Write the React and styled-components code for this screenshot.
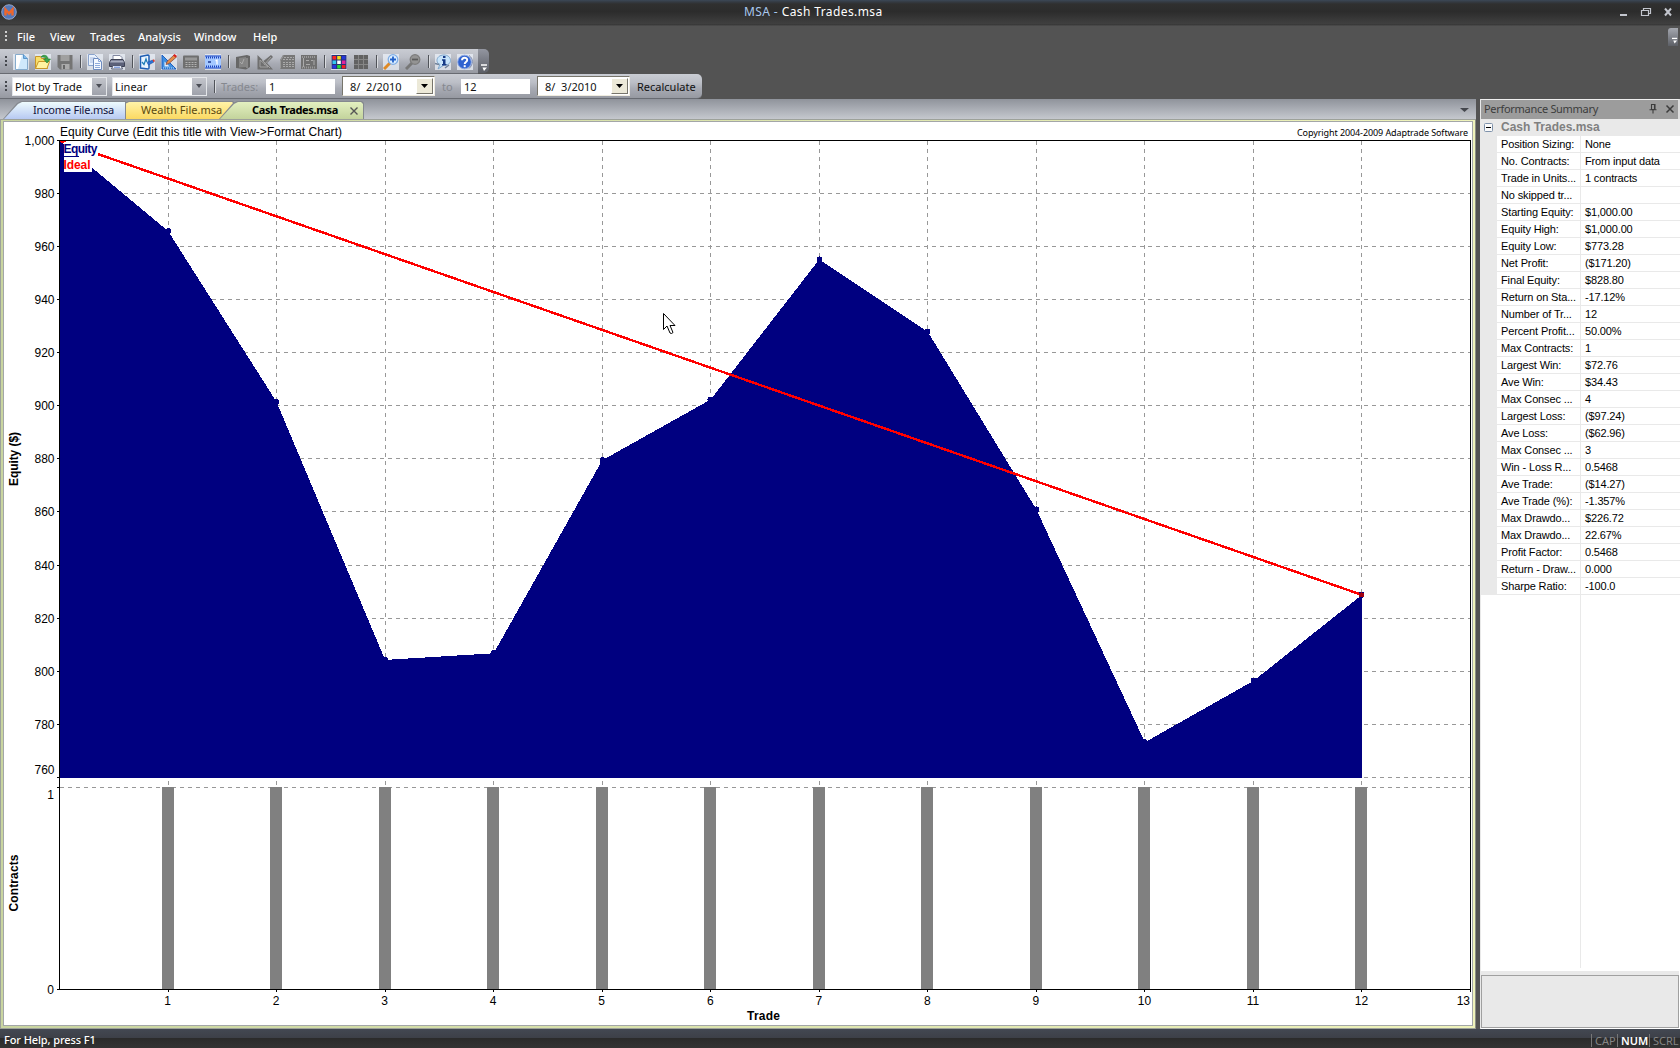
import React from "react";
import styled, { createGlobalStyle, css } from "styled-components";

const MENUS = [
    ["File", 17, 17],
    ["View", 16, 25],
    ["Trades", 15, 33],
    ["Analysis", 15, 41],
    ["Window", 15, 44],
    ["Help", 15, 24],
];

const TOOLS = [
    "new", "open", "save", "|", "copy", "print", "|", "check", "edit", "calc", "ruler", "|",
    "book", "triangle", "stack", "stats", "|", "palette", "grid", "|", "zoomIn", "zoomOut", "|",
    "info", "help",
];

const SUMMARY = [
    ["Position Sizing:", "None"],
    ["No. Contracts:", "From input data"],
    ["Trade in Units...", "1 contracts"],
    ["No skipped tr...", ""],
    ["Starting Equity:", "$1,000.00"],
    ["Equity High:", "$1,000.00"],
    ["Equity Low:", "$773.28"],
    ["Net Profit:", "($171.20)"],
    ["Final Equity:", "$828.80"],
    ["Return on Sta...", "-17.12%"],
    ["Number of Tr...", "12"],
    ["Percent Profit...", "50.00%"],
    ["Max Contracts:", "1"],
    ["Largest Win:", "$72.76"],
    ["Ave Win:", "$34.43"],
    ["Max Consec ...", "4"],
    ["Largest Loss:", "($97.24)"],
    ["Ave Loss:", "($62.96)"],
    ["Max Consec ...", "3"],
    ["Win - Loss R...", "0.5468"],
    ["Ave Trade:", "($14.27)"],
    ["Ave Trade (%):", "-1.357%"],
    ["Max Drawdo...", "$226.72"],
    ["Max Drawdo...", "22.67%"],
    ["Profit Factor:", "0.5468"],
    ["Return - Draw...", "0.000"],
    ["Sharpe Ratio:", "-100.0"],
];

const EQUITY = [1000, 965.9, 901.5, 804.3, 806.8, 879.5, 902.4, 955.2, 927.9, 861, 773.28, 796.4, 828.8];

const X0 = 59.5;
const X1 = 1470.5;
const TOP = 140.5;
const BASE = 777.5;
const C_TOP = 787.5;
const C_BASE = 989.5;
const px = (trade) => X0 + (trade * (X1 - X0)) / 13;
const py = (value) => BASE - ((value - 760) * (BASE - TOP)) / 240;
const snapX = (v) => Math.floor(v) + 0.5;
const snapY = (v) => Math.floor(v - 0.1) + 0.5;

function ToolIcon({ name }) {
    switch (name) {
        case "new":
            return (
                <Icon $lit>
                    <path d="M2.500 .5h8l4 4v11h-12z" fill="#cfe8fb" stroke="#86abcc" />
                    <path d="M3 1h6L5 15H3z" fill="#fff" />
                    <path d="M10.500 .5v4h4" fill="#7fbcee" stroke="#5c94c8" />
                </Icon>
            );
        case "open":
            return (
                <Icon $lit>
                    <path d="M.5 14.500v-12h5l1 2h6v10z" fill="#f9e06a" stroke="#c7952a" />
                    <path d="M.5 14.500l3-7h11l-2.500 7z" fill="#fff3a0" stroke="#c7952a" />
                    <path d="M6 3c2-3 7-2 7 2h2.500L12 9 8.500 5H11c0-2-3-2-5-2z" fill="#3da64a" stroke="#1b7a31" strokeWidth=".6" />
                </Icon>
            );
        case "save":
            return (
                <Icon>
                    <path d="M.5 1h15v14.500H3L.5 13z" fill="#747474" />
                    <path d="M3.500 1h9v6h-9z" fill="#a0a0a0" />
                    <path d="M4.500 10h8v5.500h-8z" fill="#aaa" />
                    <path d="M6 11h2v4H6z" fill="#666" />
                </Icon>
            );
        case "copy":
            return (
                <Icon $lit>
                    <path d="M1.500 .5h6l3 3v8h-9z" fill="#eaf2fd" stroke="#8aa3cc" />
                    <path d="M3 4h5M3 6h4M3 8h4" stroke="#a9bce0" />
                    <path d="M6.500 4.500h5l3 3v8h-8z" fill="#f5f9ff" stroke="#6d8abd" />
                    <path d="M11.500 4.500v3h3M8 9.500h5M8 11.500h5M8 13.500h5" fill="none" stroke="#8eaadb" />
                </Icon>
            );
        case "print":
            return (
                <Icon $lit>
                    <path d="M4 6.500V1.500h7l2 2v3" fill="#fff" stroke="#8187a0" />
                    <path d="M2 5.500h12l1.500 3v4H.5v-4z" fill="#5b6078" stroke="#3d4154" />
                    <path d="M2 6.500h12l1 2H1z" fill="#a9aec0" />
                    <path d="M4 11.500h8l1.500 3.500h-11z" fill="#eef1fa" stroke="#555b72" />
                    <path d="M5 13.200h6" stroke="#557bd0" />
                </Icon>
            );
        case "check":
            return (
                <Icon $lit>
                    <path d="M1.500 2.500l7.500-1.500q1 0 1 1v12q0 1-1 1l-7.500-1z" fill="#eaf5ff" stroke="#1f5fb4" strokeWidth="1.500" />
                    <path d="M3 8l2 2.500L7 5l1 3" fill="none" stroke="#1d7db8" strokeWidth="1.300" />
                    <path d="M8 8.500l5.500-2.500 1.500 2-5.500 3z" fill="#2a72d6" stroke="#174a97" strokeWidth=".5" />
                    <path d="M13.500 6l1.500-.7 1 2-1.500.7z" fill="#e23b2c" />
                </Icon>
            );
        case "edit":
            return (
                <Icon $lit>
                    <path d="M1 1l14 14H1z" fill="#3f8fe0" stroke="#1d5fc0" />
                    <path d="M3.500 7.500l5 5h-5z" fill="#e2eefb" />
                    <path d="M2 14h12" stroke="#bfe0ff" strokeDasharray="1 1" />
                    <path d="M5 10.500l1-3L13 1l2.500 2L8 9.500z" fill="#e58c46" stroke="#7c4038" strokeWidth=".7" />
                    <path d="M12 1.500L13.500 0 16 2l-1.500 1.500z" fill="#d92020" />
                </Icon>
            );
        case "calc":
            return (
                <Icon>
                    <rect y="1.500" width="16" height="13" rx="1" fill="#6f6f6f" />
                    <path d="M2 3.500h12v3H2z" fill="#989898" />
                    <path d="M2.500 8.500h11M2.500 10.500h11M2.500 12.500h11" stroke="#b1b1b1" strokeDasharray="2 1" />
                </Icon>
            );
        case "ruler":
            return (
                <Icon $lit>
                    <path d="M0 1.500h16v13H0z" fill="#a4c8ff" />
                    <path d="M0 2h16M0 14h16" stroke="#234ac4" />
                    <path d="M1 3.500h15M1 12.500h15" stroke="#1b42bf" strokeWidth="2" strokeDasharray="1 1" />
                    <path d="M3 8h3" stroke="#1c378f" strokeWidth="1.500" />
                    <path d="M12 5.500v5M10.500 6.500H12" stroke="#fff" strokeWidth="1.300" />
                </Icon>
            );
        case "book":
            return (
                <Icon>
                    <path d="M1 3l11-2 3 1v11l-4 2.500L1 14z" fill="#676767" />
                    <path d="M4 4l7-1v10l-7 .5z" fill="#858585" />
                    <path d="M5 8l2 2 2-5M12 4v10" fill="none" stroke="#aaa" />
                </Icon>
            );
        case "triangle":
            return (
                <Icon>
                    <path d="M.5 1l6 6L14 1l2 2-6 6 6 6.500H.5z" fill="#6f6f6f" />
                    <path d="M3 6v7h8zM5 6l8 8M7 11l7-8" fill="none" stroke="#a1a1a1" />
                </Icon>
            );
        case "stack":
            return (
                <Icon>
                    <path d="M4 1h12v14H1V6z" fill="#777" />
                    <path d="M5 3.500h10M4 5.500h11M4 8.500h11M4 10.500h11M4 12.500h11" stroke="#aaa" strokeDasharray="2 1" />
                    <path d="M4.500 1.500L1.500 6.500v8" fill="none" stroke="#999" />
                </Icon>
            );
        case "stats":
            return (
                <Icon>
                    <path d="M0 1h16v14H0z" fill="#707070" />
                    <path d="M1 3h14M1 13.500h14" stroke="#999" strokeWidth="2" strokeDasharray="1 1" />
                    <path d="M2.500 4v9M5 6.500h3M10 6.500h2M13 6v5M5 10.500h4" stroke="#aaa" />
                </Icon>
            );
        case "palette": {
            const colors = ["#f22", "#f3df18", "#2436d8", "#36c8ef", "#fff", "#e3229c", "#2536e0", "#23d936", "#f02020"];
            return (
                <Icon $lit>
                    <rect x=".5" y="1" width="15" height="14" fill="#283278" />
                    {colors.map((c, i) => (
                        <rect key={i} x={1.5 + (i % 3) * 4.7} y={2 + Math.floor(i / 3) * 4.5} width="3.600" height="3.500" fill={c} />
                    ))}
                </Icon>
            );
        }
        case "grid":
            return (
                <Icon>
                    <path d="M1 1h14v14H1z" fill="#626262" />
                    <path d="M1 5.500h14M1 10.500h14M5.500 1v14M10.500 1v14" stroke="#868686" />
                </Icon>
            );
        case "zoomIn":
            return (
                <Icon $lit>
                    <path d="M1 15l6-6" stroke="#df8925" strokeWidth="3" />
                    <circle cx="10" cy="5.500" r="4.800" fill="#dceeff" stroke="#80aee5" strokeWidth="1.300" />
                    <path d="M10 2.500v6M7 5.500h6" stroke="#2161c9" strokeWidth="1.800" />
                </Icon>
            );
        case "zoomOut":
            return (
                <Icon>
                    <path d="M1 15l6-6" stroke="#777" strokeWidth="3" />
                    <circle cx="10" cy="5.500" r="4.800" fill="#949494" stroke="#7d7d7d" strokeWidth="1.300" />
                    <path d="M7 5.500h6" stroke="#5c5c5c" strokeWidth="1.800" />
                </Icon>
            );
        case "info":
            return (
                <Icon $lit>
                    <path d="M9 1C4.500 1 2 3.500 2 6.500c0 2 1 3 3 4L3 15l6-4c4 0 6.500-1.500 6.500-4.500S13 1 9 1z" fill="#c8e4fa" stroke="#7ea6cc" />
                    <path d="M0 9.500l4 1M10 14l4-3" stroke="#6f819b" strokeWidth="1.500" />
                    <path d="M8 2h2.500v2H8zM7 5.300h3.500V10h1v1.500H7V10h1V6.800H7z" fill="#163a86" />
                </Icon>
            );
        default:
            return (
                <Icon $lit>
                    <path d="M12 1.500c4.500 3 4.500 9 0 13" stroke="#7a86a8" />
                    <circle cx="7.500" cy="8" r="6.800" fill="#2f62d0" stroke="#8fa9e0" />
                    <path d="M5 6.300C5 2.800 10.200 3 10.200 6c0 2-2.500 2-2.500 4" fill="none" stroke="#fff" strokeWidth="1.900" />
                    <path d="M6.700 11.200h2v2h-2z" fill="#fff" />
                </Icon>
            );
    }
}

function Overflow() {
    return (
        <OverflowMark width="7" height="8" viewBox="0 0 7 8">
            <path d="M0 1h6" stroke="#fff" strokeWidth="1.500" />
            <path d="M1.500 3.500h4.500L3 7z" fill="#fff" />
        </OverflowMark>
    );
}

function Arrow({ color = "#000", w = 7 }) {
    return (
        <svg width={w} height="4" viewBox="0 0 7 4" preserveAspectRatio="none">
            <path d="M0 0h7L3.500 4z" fill={color} />
        </svg>
    );
}

function DateBox({ children }) {
    return (
        <DatePicker>
            <span>{children}</span>
            <DateButton>
                <Arrow />
            </DateButton>
        </DatePicker>
    );
}

function EquityChart() {
    const outline = EQUITY.map((v, i) => `${px(i)},${py(v)}`).join(" ");
    const levels = Array.from({ length: 13 }, (_, i) => 760 + i * 20);
    const trades = Array.from({ length: 12 }, (_, i) => i + 1);

    return (
        <Canvas viewBox="4 122 1468 903">
            <text x="60" y="136" textLength="282">
                Equity Curve (Edit this title with View-&gt;Format Chart)
            </text>
            <Copyright x="1297" y="136" textLength="171">
                Copyright 2004-2009 Adaptrade Software
            </Copyright>

            <g stroke="#989898" strokeDasharray="4 4" shapeRendering="crispEdges">
                {levels.slice(0, 12).map((v) => (
                    <path key={v} d={`M60 ${snapY(py(v))}H1470`} />
                ))}
                <path d={`M60 ${C_TOP}H1470`} />
                {trades.map((t) => (
                    <path key={t} d={`M${snapX(px(t))} 141V989`} />
                ))}
            </g>

            <g shapeRendering="crispEdges">
                <polygon points={`${X0},${BASE} ${outline} ${px(12)},${BASE}`} fill="#000080" />
                {EQUITY.slice(1).map((v, i) => (
                    <circle key={i} cx={snapX(px(i + 1))} cy={py(v)} r="3" fill="#000080" />
                ))}
                <path d={`M${X0 + 1} ${TOP + 0.5}L${px(12)} ${py(828.8)}`} stroke="#f00" strokeWidth="2.400" />
                <path d="M60 141h4v2h-2z" fill="#f00" />
                <circle cx={snapX(px(12))} cy={py(828.8)} r="2.500" fill="#a00010" />
                {trades.map((t) => (
                    <rect key={t} x={snapX(px(t)) - 6.5} y="787" width="12" height="202" fill="#808080" />
                ))}
                <path d={`M${X0} ${C_BASE}V${TOP}H${X1}V992M57 ${C_BASE}H${X1}`} fill="none" stroke="#000" />
                {levels.map((v) => (
                    <path key={v} d={`M57 ${snapY(py(v))}h3`} stroke="#000" />
                ))}
                <path d="M57 787.500h3" stroke="#000" />
                {trades.map((t) => (
                    <path key={t} d={`M${snapX(px(t))} 989v3`} stroke="#000" />
                ))}
                <rect x="64" y="142" width="34" height="15" fill="#fff" />
                <rect x="64" y="156" width="28" height="16" fill="#fff" />
                <path d="M64 156.500h15" stroke="#000080" />
            </g>

            <text x="63.500" y="153" textLength="34" fontWeight="700" fill="#000080">Equity</text>
            <text x="63.500" y="169" textLength="27" fontWeight="700" fill="#f00">Ideal</text>

            {levels.map((v) => (
                <text key={v} x="54.500" y={v === 760 ? 774 : snapY(py(v)) + 4} textAnchor="end">
                    {v.toLocaleString("en-US")}
                </text>
            ))}
            <text x="54" y="799" textAnchor="end">1</text>
            <text x="54" y="993.500" textAnchor="end">0</text>
            {trades.map((t) => (
                <text key={t} x={px(t) - 0.5} y="1005" textAnchor="middle">{t}</text>
            ))}
            <text x="1470" y="1005" textAnchor="end">13</text>
            <text x="747" y="1019.500" textLength="33" fontWeight="700">Trade</text>
            <text transform="translate(18 486) rotate(-90)" textLength="54" fontWeight="700">Equity ($)</text>
            <text transform="translate(18 911.500) rotate(-90)" textLength="57" fontWeight="700">Contracts</text>

            <path
                d="M663.500 313.500v16l3.500-3.500 3 7 1.500 .5 1.500-1-3-7h5z"
                fill="#fff"
                stroke="#000"
            />
        </Canvas>
    );
}

function App() {
    return (
        <Window>
            <GlobalStyle />
            <TitleBar>
                <svg width="16" height="16" viewBox="0 0 16 16">
                    <circle cx="8" cy="8" r="7.300" fill="#5578b8" stroke="#a9b9dc" strokeWidth=".8" />
                    <path d="M4.500 11.500v-6l3.500 4 3.500-4v6" fill="none" stroke="#f0662a" strokeWidth="2.400" />
                </svg>
                <WindowTitle>
                    <span>MSA - </span>Cash Trades.msa
                </WindowTitle>
                <svg width="56" height="12" viewBox="0 0 56 12" fill="none" stroke="#c3c6ce">
                    <path d="M2 9h7" strokeWidth="2" />
                    <path d="M23.500 4.500h7v5h-7zM25.500 4V2.500h7v5h-2" strokeWidth="1.200" />
                    <path d="M47 2.500l6 7M53 2.500l-6 7" strokeWidth="2" />
                </svg>
            </TitleBar>
            <MenuBar>
                <Grip $light />
                {MENUS.map(([label, gap, width], i) => (
                    <MenuItem key={label} $gap={i ? gap : 9} $width={width}>{label}</MenuItem>
                ))}
                <MenuEnd>
                    <Overflow />
                </MenuEnd>
            </MenuBar>
            <ToolRow>
                <Toolbar $width={478}>
                    <Grip />
                    {TOOLS.map((name, i) =>
                        name === "|" ? <Separator key={i} /> : <ToolSlot key={i}><ToolIcon name={name} /></ToolSlot>
                    )}
                </Toolbar>
                <ToolbarEnd>
                    <Overflow />
                </ToolbarEnd>
            </ToolRow>
            <ToolRow>
                <Toolbar $width={702} $round>
                    <Grip />
                    <Combo>
                        Plot by Trade
                        <ComboButton><Arrow color="#4a4d55" w={6} /></ComboButton>
                    </Combo>
                    <Combo $linear>
                        Linear
                        <ComboButton><Arrow color="#4a4d55" w={6} /></ComboButton>
                    </Combo>
                    <Separator />
                    <Caption $width={48} $pad={3}>Trades:</Caption>
                    <NumberBox>1</NumberBox>
                    <DateBox>8/&nbsp; 2/2010</DateBox>
                    <Caption $width={26} $pad={7}>to</Caption>
                    <NumberBox>12</NumberBox>
                    <DateBox>8/&nbsp; 3/2010</DateBox>
                    <Recalculate>Recalculate</Recalculate>
                </Toolbar>
            </ToolRow>
            <Workspace>
                <Document>
                    <TabStrip>
                        <Tab $tone="blue" $width={123}>Income File.msa</Tab>
                        <Tab $tone="yellow" $width={125}>Wealth File.msa</Tab>
                        <Tab $tone="green" $width={145}>
                            Cash Trades.msa
                            <svg width="8" height="8" viewBox="0 0 8 8">
                                <path d="M.5 .5l7 7M7.500 .5l-7 7" stroke="#555" strokeWidth="1.400" />
                            </svg>
                        </Tab>
                        <TabMenu>
                            <Arrow color="#44474d" w={9} />
                        </TabMenu>
                    </TabStrip>
                    <Frame>
                        <EquityChart />
                    </Frame>
                </Document>
                <Panel>
                    <PanelHeader>
                        <span>Performance Summary</span>
                        <svg width="26" height="10" viewBox="0 0 26 10" fill="none" stroke="#3c3c3c">
                            <path d="M2.500 .5h3.500v5H2.500zM5.500 .5v5M.5 5.800h7M4 6v3.500" strokeWidth="1.100" />
                            <path d="M17.500 1.500l7 7M24.500 1.500l-7 7" strokeWidth="1.500" />
                        </svg>
                    </PanelHeader>
                    <Group>
                        <svg width="9" height="9" viewBox="0 0 9 9">
                            <rect x=".5" y=".5" width="8" height="8" rx="1" fill="#fafafa" stroke="#7f92ab" />
                            <path d="M2 4.500h5" stroke="#000" />
                        </svg>
                        Cash Trades.msa
                    </Group>
                    {SUMMARY.map(([label, value], i) => (
                        <Row key={i}>
                            <Label>{label}</Label>
                            <Value>{value}</Value>
                        </Row>
                    ))}
                    <Blank />
                    <Description />
                </Panel>
            </Workspace>
            <StatusBar>
                <StatusText>For Help, press F1</StatusText>
                <Key $width={26}>CAP</Key>
                <Key $width={32} $on>NUM</Key>
                <Key $width={31}>SCRL</Key>
            </StatusBar>
        </Window>
    );
}

export default App;

const GlobalStyle = createGlobalStyle`
    * {
        box-sizing: border-box;
    }
    body {
        margin: 0;
        overflow: hidden;
        background: #535353;
    }
`;

const ui = css`
    font-family: "Noto Sans", "Open Sans", sans-serif;
    font-size: 11px;
    white-space: nowrap;
`;

const silver = css`
    background: linear-gradient(#c9ccd3 0%, #bcbfc7 35%, #a8abb4 60%, #9699a1 100%);
`;

const Window = styled.div`
    ${ui}
    width: 1680px;
    height: 1048px;
    display: flex;
    flex-direction: column;
    background: #535353;
    overflow: hidden;
`;
const TitleBar = styled.div`
    height: 26px;
    flex: none;
    display: flex;
    align-items: center;
    padding: 0 6px 3px 1px;
    background: linear-gradient(#3c4857 0, #343a42 2px, #303030 4px, #2c2c2c 45%, #404040 92%, #343434 96%, #5a5a5a 100%);
`;
const WindowTitle = styled.div`
    flex: 1;
    color: #fff;
    font-size: 12px;
    padding-left: 727px;
    letter-spacing: 0.4px;
    span {
        color: #a9c8ee;
        white-space: pre;
    }
`;
const MenuBar = styled.div`
    height: 23px;
    flex: none;
    display: flex;
    align-items: center;
    padding-bottom: 2px;
`;
const MenuItem = styled.div`
    color: #fff;
    font-weight: 500;
    margin-left: ${(p) => p.$gap}px;
    width: ${(p) => p.$width}px;
`;
const MenuEnd = styled.div`
    margin-left: auto;
    margin-right: 2px;
    width: 10px;
    height: 18px;
    display: flex;
    align-items: flex-end;
    padding: 0 0 1px 4px;
    border-top-left-radius: 3px;
    background: linear-gradient(#a5a8b0, #5c5f66);
`;
const Grip = styled.div`
    width: 3px;
    height: 11px;
    margin-left: 5px;
    flex: none;
    background: repeating-linear-gradient(${(p) => (p.$light ? "#d0d0d0" : "#44474d")} 0 2px, transparent 2px 4px);
    clip-path: inset(0 1px 0 0);
`;
const ToolRow = styled.div`
    height: 25px;
    flex: none;
    display: flex;
`;
const Toolbar = styled.div`
    ${silver}
    width: ${(p) => p.$width}px;
    height: 25px;
    display: flex;
    align-items: center;
    border-bottom: 1px solid #686b72;
    border-radius: ${(p) => (p.$round ? "0 5px 5px 0" : "0")};
    color: #111;
`;
const ToolSlot = styled.div`
    width: 22px;
    display: flex;
    justify-content: center;
    padding-top: 1px;
    &:nth-child(2) {
        margin-left: 2px;
    }
`;
const Icon = styled.svg.attrs({ width: 16, height: 16, viewBox: "0 0 16 16", fill: "none" })`
    display: block;
    background: ${(p) => (p.$lit ? "rgba(235, 240, 248, 0.75)" : "none")};
`;
const Separator = styled.div`
    width: 8px;
    height: 13px;
    flex: none;
    background: linear-gradient(#505359, #505359) 4px 0 / 1px 100% no-repeat,
        linear-gradient(#dadce0, #dadce0) 5px 1px / 1px 100% no-repeat;
`;
const ToolbarEnd = styled.div`
    width: 11px;
    height: 24px;
    display: flex;
    align-items: flex-end;
    padding: 0 0 1px 3px;
    border-radius: 0 5px 5px 0;
    background: linear-gradient(#9396a0, #5b5e66);
`;
const OverflowMark = styled.svg`
    display: block;
`;
const Combo = styled.div`
    width: 95px;
    height: 19px;
    margin-left: ${(p) => (p.$linear ? 5 : 4)}px;
    margin-right: ${(p) => (p.$linear ? 3 : 0)}px;
    padding-left: 2px;
    display: flex;
    align-items: center;
    justify-content: space-between;
    background: #fff;
    border: 1px solid #e4e6ea;
    flex: none;
`;
const ComboButton = styled.div`
    width: 14px;
    height: 17px;
    display: flex;
    align-items: center;
    justify-content: center;
    background: linear-gradient(#c3c5cc, #9fa2ab);
`;
const Caption = styled.div`
    width: ${(p) => p.$width}px;
    padding-left: ${(p) => p.$pad}px;
    color: #85888f;
    flex: none;
`;
const NumberBox = styled.div`
    width: 69px;
    height: 15px;
    padding-left: 3px;
    display: flex;
    align-items: center;
    background: #fff;
    flex: none;
`;
const DatePicker = styled.div`
    width: 93px;
    height: 20px;
    margin-left: 7px;
    padding: 0 1px 0 7px;
    display: flex;
    align-items: center;
    justify-content: space-between;
    background: #fff;
    border: 1px solid;
    border-color: #77756b #efece0 #efece0 #77756b;
    flex: none;
`;
const DateButton = styled.div`
    width: 17px;
    height: 16px;
    display: flex;
    align-items: center;
    justify-content: center;
    background: #ece9d8;
    border: 1px solid;
    border-color: #fff #77756b #77756b #fff;
`;
const Recalculate = styled.div`
    margin-left: 7px;
`;

const Workspace = styled.div`
    height: 930px;
    flex: none;
    display: flex;
`;
const Document = styled.div`
    width: 1476px;
    display: flex;
    flex-direction: column;
`;
const TabStrip = styled.div`
    height: 20px;
    display: flex;
    align-items: flex-end;
    padding: 0 7px 0 3px;
    background: linear-gradient(#8f939b, #c5c8ce);
    isolation: isolate;
`;
const tones = {
    blue: ["#eefbfd", "#b7c9f2", "polygon(0 100%, 14px 2px, 18px 0, 100% 0, 100% 100%)"],
    yellow: ["#fff3a8", "#fbd962", "polygon(0 100%, 14px 2px, 18px 0, calc(100% - 2px) 0, 100% 2px, 100% 100%)"],
    green: ["#e3f0c0", "#c3d39c", "polygon(0 100%, 14px 2px, 18px 0, calc(100% - 2px) 0, 100% 2px, 100% 100%)"],
};
const Tab = styled.div`
    width: ${(p) => p.$width}px;
    height: 18px;
    flex: none;
    position: relative;
    z-index: ${(p) => (p.$tone === "yellow" ? 0 : 1)};
    margin-left: ${(p) => ({ blue: 0, yellow: -16, green: -16 })[p.$tone]}px;
    padding: 0 0 2px ${(p) => ({ blue: 30, yellow: 31, green: 33 })[p.$tone]}px;
    display: flex;
    align-items: center;
    color: ${(p) => ({ blue: "#12123c", yellow: "#5c4a10", green: "#000" })[p.$tone]};
    font-weight: ${(p) => (p.$tone === "green" ? 700 : 400)};
    letter-spacing: ${(p) => ({ blue: -0.2, yellow: 0, green: -0.35 })[p.$tone]}px;
    background: #85898f;
    clip-path: ${(p) => tones[p.$tone][2]};
    &::before {
        content: "";
        position: absolute;
        inset: 1px 1px 0 1px;
        z-index: -1;
        background: linear-gradient(${(p) => tones[p.$tone][0]}, ${(p) => tones[p.$tone][1]});
        clip-path: ${(p) => tones[p.$tone][2]};
    }
    svg {
        margin: 3px 6px 0 auto;
    }
`;
const TabMenu = styled.div`
    margin: 0 0 7px auto;
    display: flex;
`;
const Frame = styled.div`
    height: 910px;
    padding: 2px 3px 3px 3px;
    border: 1px solid #9da19a;
    border-right-color: #8d9086;
    background: linear-gradient(90deg, #c9d5a0, #eff3bb);
    display: flex;
`;
const Canvas = styled.svg`
    width: 1468px;
    height: 903px;
    display: block;
    background: #fff;
    outline: 1px solid #a3a6a8;
    font-family: "Liberation Sans", Arial, sans-serif;
    font-size: 12px;
`;
const Copyright = styled.text`
    font-family: "Noto Sans", sans-serif;
    font-size: 9px;
`;

const Panel = styled.div`
    width: 200px;
    margin-left: 4px;
    display: flex;
    flex-direction: column;
    background: #fff;
    border-left: 1px solid #e9e9e9;
    font-family: "Liberation Sans", Arial, sans-serif;
    font-size: 11px;
    color: #000;
`;
const PanelHeader = styled.div`
    ${ui}
    height: 20px;
    flex: none;
    display: flex;
    align-items: center;
    justify-content: space-between;
    padding: 0 3px 2px 3px;
    border-top: 1px solid #eee;
    border-right: 2px solid #ddd;
    background: #9c9c9c;
    color: #3c3c3c;
    letter-spacing: -0.3px;
`;
const Group = styled.div`
    height: 17px;
    flex: none;
    display: flex;
    align-items: center;
    gap: 8px;
    padding: 0 0 1px 3px;
    background: #e9e9e9;
    color: #808080;
    font-weight: 700;
    font-size: 12px;
`;
const Row = styled.div`
    height: 17px;
    flex: none;
    display: flex;
    line-height: 16px;
    border-left: 16px solid #e9e9e9;
`;
const Label = styled.div`
    width: 84px;
    padding-left: 4px;
    border-right: 1px solid #e9e9e9;
    border-bottom: 1px solid #e9e9e9;
    letter-spacing: -0.13px;
    white-space: nowrap;
`;
const Value = styled.div`
    flex: 1;
    padding-left: 4px;
    border-bottom: 1px solid #e9e9e9;
    letter-spacing: -0.15px;
`;
const Blank = styled.div`
    width: 100px;
    height: 373px;
    flex: none;
    border-right: 1px solid #e9e9e9;
`;
const Description = styled.div`
    height: 53px;
    margin: auto 1px 1px 0;
    border: 1px solid #a0a0a0;
    box-shadow: 0 -4px #e9e9e9;
    background: #e9e9e9;
`;
const StatusBar = styled.div`
    height: 19px;
    flex: none;
    display: flex;
    align-items: center;
    padding-left: 4px;
    background: linear-gradient(#434852 0, #3d4048 45%, #2b2b2b 50%, #333 100%);
    color: #fff;
`;
const StatusText = styled.div`
    flex: 1;
    padding-top: 1px;
    letter-spacing: -0.1px;
    font-weight: 500;
`;
const Key = styled.div`
    width: ${(p) => p.$width}px;
    margin-top: 3px;
    padding-left: 3px;
    line-height: 13px;
    border-left: 1px solid #777;
    color: ${(p) => (p.$on ? "#fff" : "#858585")};
    font-weight: ${(p) => (p.$on ? 600 : 400)};
`;
